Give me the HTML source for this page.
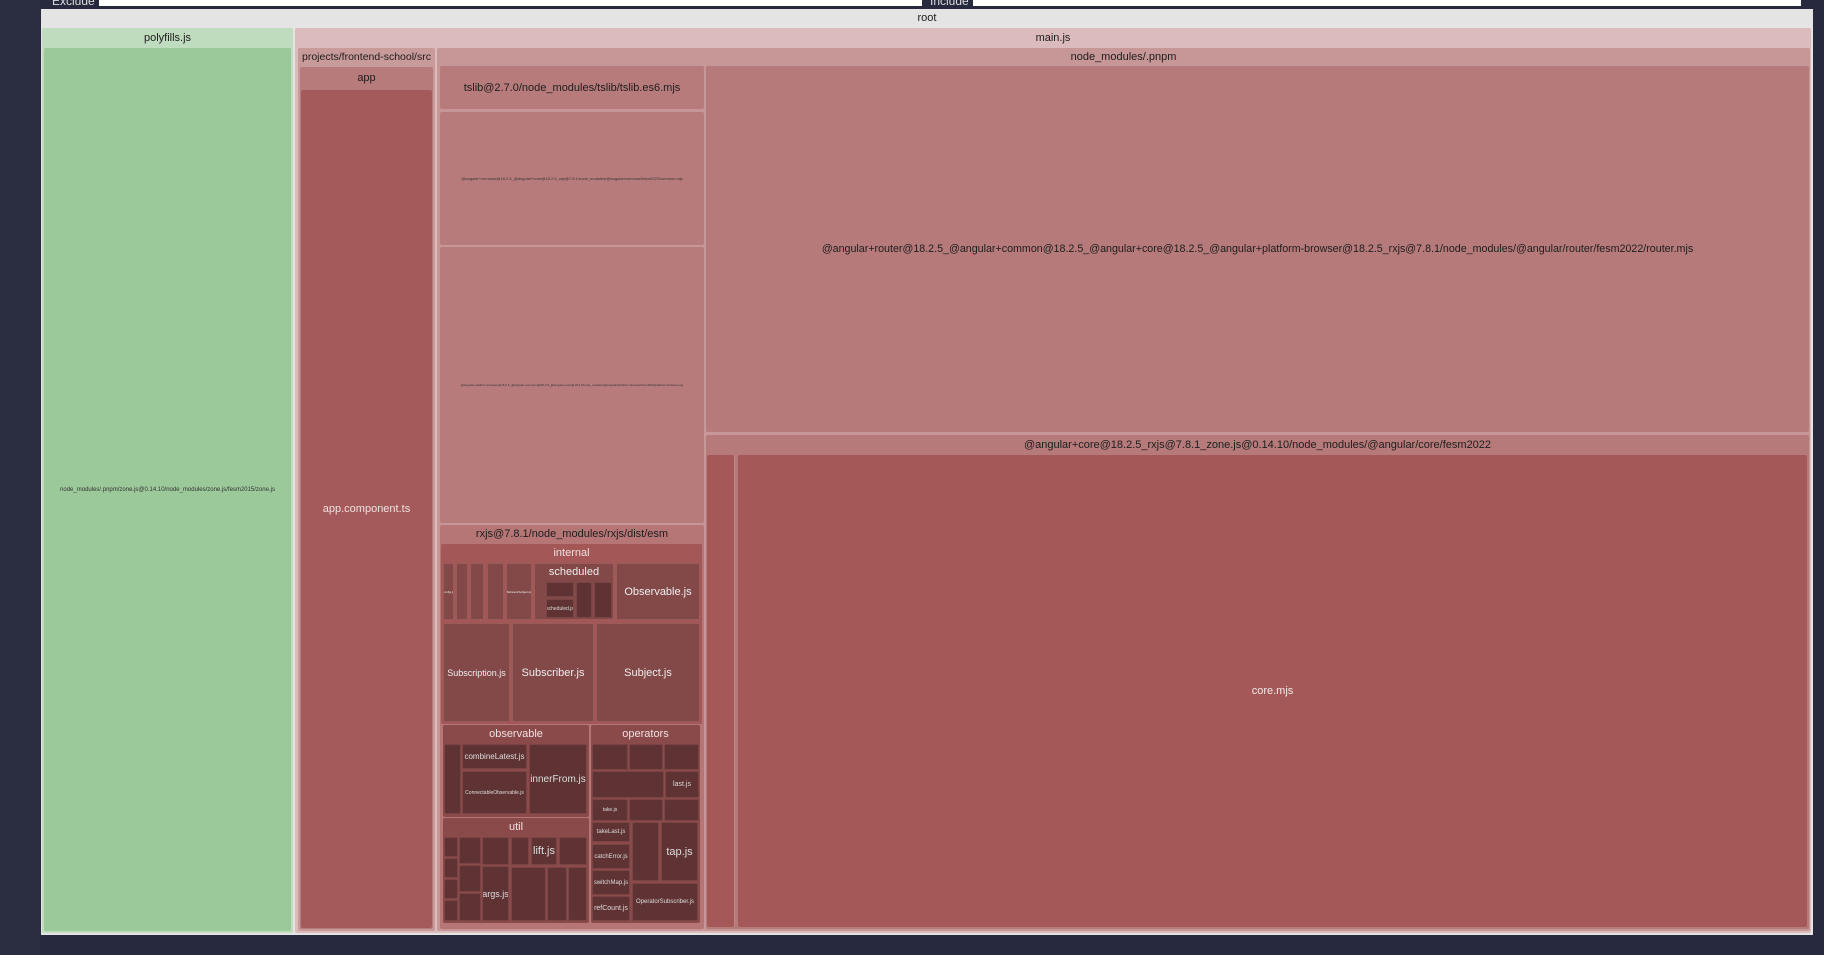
<!DOCTYPE html>
<html><head><meta charset="utf-8"><style>
body{margin:0;width:1824px;height:955px;background:#272a3e;overflow:hidden;font-family:"Liberation Sans",sans-serif;position:relative}
.b{position:absolute;box-sizing:border-box;display:flex;align-items:center;justify-content:center;text-align:center;overflow:hidden;white-space:nowrap;border-radius:2px}
.h{position:absolute;box-sizing:border-box;text-align:center;white-space:nowrap;overflow:hidden;font-size:11px;color:#1d1d1d}
.d{background:#834848;color:#eee;border:1px solid #9a5a5a}
.e{background:#5f3333;color:#ddd;border:1px solid #7a4444}
</style></head><body>
<div style="position:absolute;left:0;top:0;width:40px;height:955px;background:#2b2d40"></div>
<div class="h" style="left:52px;top:-6px;font-size:12px;color:#ddd">Exclude</div>
<div style="position:absolute;left:99px;top:0;width:823px;height:6px;background:#fff"></div>
<div class="h" style="left:930px;top:-6px;font-size:12px;color:#ddd">Include</div>
<div style="position:absolute;left:973px;top:0;width:828px;height:6px;background:#fff"></div>

<div class="b" style="left:41px;top:9px;width:1772px;height:926px;background:#e4e4e4;border-radius:0"></div>
<div class="h" style="left:41px;top:12px;width:1772px">root</div>

<div class="b" style="left:42px;top:28px;width:251px;height:905px;background:#bfdcbf"></div>
<div class="h" style="left:42px;top:32px;width:251px">polyfills.js</div>
<div class="b" style="left:44px;top:48px;width:247px;height:883px;background:#9cc999;font-size:6px;color:#333">node_modules/.pnpm/zone.js@0.14.10/node_modules/zone.js/fesm2015/zone.js</div>

<div class="b" style="left:295px;top:28px;width:1516px;height:905px;background:#dbbbbb"></div>
<div class="h" style="left:295px;top:32px;width:1516px">main.js</div>

<div class="b" style="left:298px;top:48px;width:137px;height:883px;background:#c99a9a"></div>
<div class="h" style="left:298px;top:51px;width:137px;font-size:10.5px">projects/frontend-school/src</div>
<div class="b" style="left:300px;top:67px;width:133px;height:862px;background:#b77b7b"></div>
<div class="h" style="left:300px;top:72px;width:133px">app</div>
<div class="b" style="left:301px;top:90px;width:131px;height:838px;background:#a45a5a;font-size:11px;color:#f0e0e0">app.component.ts</div>

<div class="b" style="left:437px;top:48px;width:1373px;height:883px;background:#c79696"></div>
<div class="h" style="left:437px;top:51px;width:1373px">node_modules/.pnpm</div>

<div class="b" style="left:440px;top:66px;width:264px;height:43px;background:#b87b7b;font-size:11px;color:#1d1d1d">tslib@2.7.0/node_modules/tslib/tslib.es6.mjs</div>
<div class="b" style="left:440px;top:112px;width:264px;height:133px;background:#b87b7b;font-size:4px;color:#333">@angular+common@18.2.5_@angular+core@18.2.5_rxjs@7.8.1/node_modules/@angular/common/fesm2022/common.mjs</div>
<div class="b" style="left:440px;top:247px;width:264px;height:276px;background:#b87b7b;font-size:3px;color:#333">@angular+platform-browser@18.2.5_@angular+common@18.2.5_@angular+core@18.2.5/node_modules/@angular/platform-browser/fesm2022/platform-browser.mjs</div>

<div class="b" style="left:440px;top:525px;width:264px;height:404px;background:#b77676"></div>
<div class="h" style="left:440px;top:528px;width:264px">rxjs@7.8.1/node_modules/rxjs/dist/esm</div>
<div class="b" style="left:441px;top:544px;width:261px;height:180px;background:#a35757"></div>
<div class="h" style="left:441px;top:547px;width:261px;color:#f0e0e0">internal</div>
<div class="b d" style="left:443px;top:563px;width:11px;height:57px;font-size:3px">config.js</div>
<div class="b d" style="left:456px;top:563px;width:12px;height:57px"></div>
<div class="b d" style="left:470px;top:563px;width:14px;height:57px"></div>
<div class="b d" style="left:487px;top:563px;width:17px;height:57px"></div>
<div class="b d" style="left:506px;top:563px;width:26px;height:57px;font-size:3px">BehaviorSubject.js</div>
<div class="b d" style="left:534px;top:563px;width:80px;height:57px;align-items:flex-start;padding-top:2px;font-size:11px">scheduled</div>
<div class="b e" style="left:546px;top:582px;width:28px;height:15px"></div>
<div class="b e" style="left:546px;top:599px;width:28px;height:19px;font-size:5px">scheduled.js</div>
<div class="b e" style="left:576px;top:582px;width:16px;height:36px"></div>
<div class="b e" style="left:594px;top:582px;width:18px;height:36px"></div>
<div class="b d" style="left:616px;top:563px;width:84px;height:57px;font-size:11px">Observable.js</div>
<div class="b d" style="left:443px;top:623px;width:67px;height:99px;font-size:9px">Subscription.js</div>
<div class="b d" style="left:512px;top:623px;width:82px;height:99px;font-size:11px">Subscriber.js</div>
<div class="b d" style="left:596px;top:623px;width:104px;height:99px;font-size:11px">Subject.js</div>

<div class="b" style="left:443px;top:725px;width:146px;height:92px;background:#8a4a4a"></div>
<div class="h" style="left:443px;top:728px;width:146px;color:#f0e0e0">observable</div>
<div class="b e" style="left:444px;top:744px;width:17px;height:70px"></div>
<div class="b e" style="left:462px;top:744px;width:65px;height:25px;font-size:8px">combineLatest.js</div>
<div class="b e" style="left:462px;top:771px;width:65px;height:43px;font-size:5px">ConnectableObservable.js</div>
<div class="b e" style="left:529px;top:744px;width:58px;height:70px;font-size:10px">innerFrom.js</div>

<div class="b" style="left:443px;top:818px;width:146px;height:105px;background:#8a4a4a"></div>
<div class="h" style="left:443px;top:821px;width:146px;color:#f0e0e0">util</div>
<div class="b e" style="left:444px;top:837px;width:14px;height:20px"></div>
<div class="b e" style="left:444px;top:858px;width:14px;height:20px"></div>
<div class="b e" style="left:444px;top:879px;width:14px;height:20px"></div>
<div class="b e" style="left:444px;top:900px;width:14px;height:21px"></div>
<div class="b e" style="left:459px;top:837px;width:22px;height:27px"></div>
<div class="b e" style="left:459px;top:865px;width:22px;height:27px"></div>
<div class="b e" style="left:459px;top:893px;width:22px;height:28px"></div>
<div class="b e" style="left:482px;top:837px;width:27px;height:28px"></div>
<div class="b e" style="left:482px;top:866px;width:27px;height:55px;font-size:9px">args.js</div>
<div class="b e" style="left:511px;top:837px;width:18px;height:28px"></div>
<div class="b e" style="left:531px;top:837px;width:26px;height:28px;font-size:11px">lift.js</div>
<div class="b e" style="left:559px;top:837px;width:28px;height:28px"></div>
<div class="b e" style="left:511px;top:867px;width:35px;height:54px"></div>
<div class="b e" style="left:547px;top:867px;width:20px;height:54px"></div>
<div class="b e" style="left:568px;top:867px;width:19px;height:54px"></div>

<div class="b" style="left:591px;top:725px;width:109px;height:198px;background:#8a4a4a"></div>
<div class="h" style="left:591px;top:728px;width:109px;color:#f0e0e0">operators</div>
<div class="b e" style="left:592px;top:744px;width:36px;height:26px"></div>
<div class="b e" style="left:629px;top:744px;width:34px;height:26px"></div>
<div class="b e" style="left:664px;top:744px;width:35px;height:26px"></div>
<div class="b e" style="left:592px;top:771px;width:72px;height:27px"></div>
<div class="b e" style="left:665px;top:771px;width:34px;height:27px;font-size:7px">last.js</div>
<div class="b e" style="left:592px;top:799px;width:36px;height:22px;font-size:5px">take.js</div>
<div class="b e" style="left:629px;top:799px;width:34px;height:22px"></div>
<div class="b e" style="left:664px;top:799px;width:35px;height:22px"></div>
<div class="b e" style="left:592px;top:822px;width:38px;height:20px;font-size:6px">takeLast.js</div>
<div class="b e" style="left:592px;top:844px;width:38px;height:25px;font-size:6px">catchError.js</div>
<div class="b e" style="left:592px;top:870px;width:38px;height:25px;font-size:6px">switchMap.js</div>
<div class="b e" style="left:592px;top:896px;width:38px;height:25px;font-size:7px">refCount.js</div>
<div class="b e" style="left:632px;top:822px;width:27px;height:59px"></div>
<div class="b e" style="left:661px;top:822px;width:37px;height:59px;font-size:11px">tap.js</div>
<div class="b e" style="left:632px;top:883px;width:66px;height:38px;font-size:6px">OperatorSubscriber.js</div>

<div class="b" style="left:706px;top:66px;width:1103px;height:366px;background:#b77a7a;font-size:10.7px;color:#1d1d1d">@angular+router@18.2.5_@angular+common@18.2.5_@angular+core@18.2.5_@angular+platform-browser@18.2.5_rxjs@7.8.1/node_modules/@angular/router/fesm2022/router.mjs</div>

<div class="b" style="left:706px;top:435px;width:1103px;height:494px;background:#b77a7a"></div>
<div class="h" style="left:706px;top:439px;width:1103px">@angular+core@18.2.5_rxjs@7.8.1_zone.js@0.14.10/node_modules/@angular/core/fesm2022</div>
<div class="b" style="left:707px;top:455px;width:28px;height:472px;background:#a45858;border-right:1px solid #c08888"></div>
<div class="b" style="left:738px;top:455px;width:1069px;height:472px;background:#a45858;font-size:11px;color:#f4e8e8">core.mjs</div>
</body></html>
